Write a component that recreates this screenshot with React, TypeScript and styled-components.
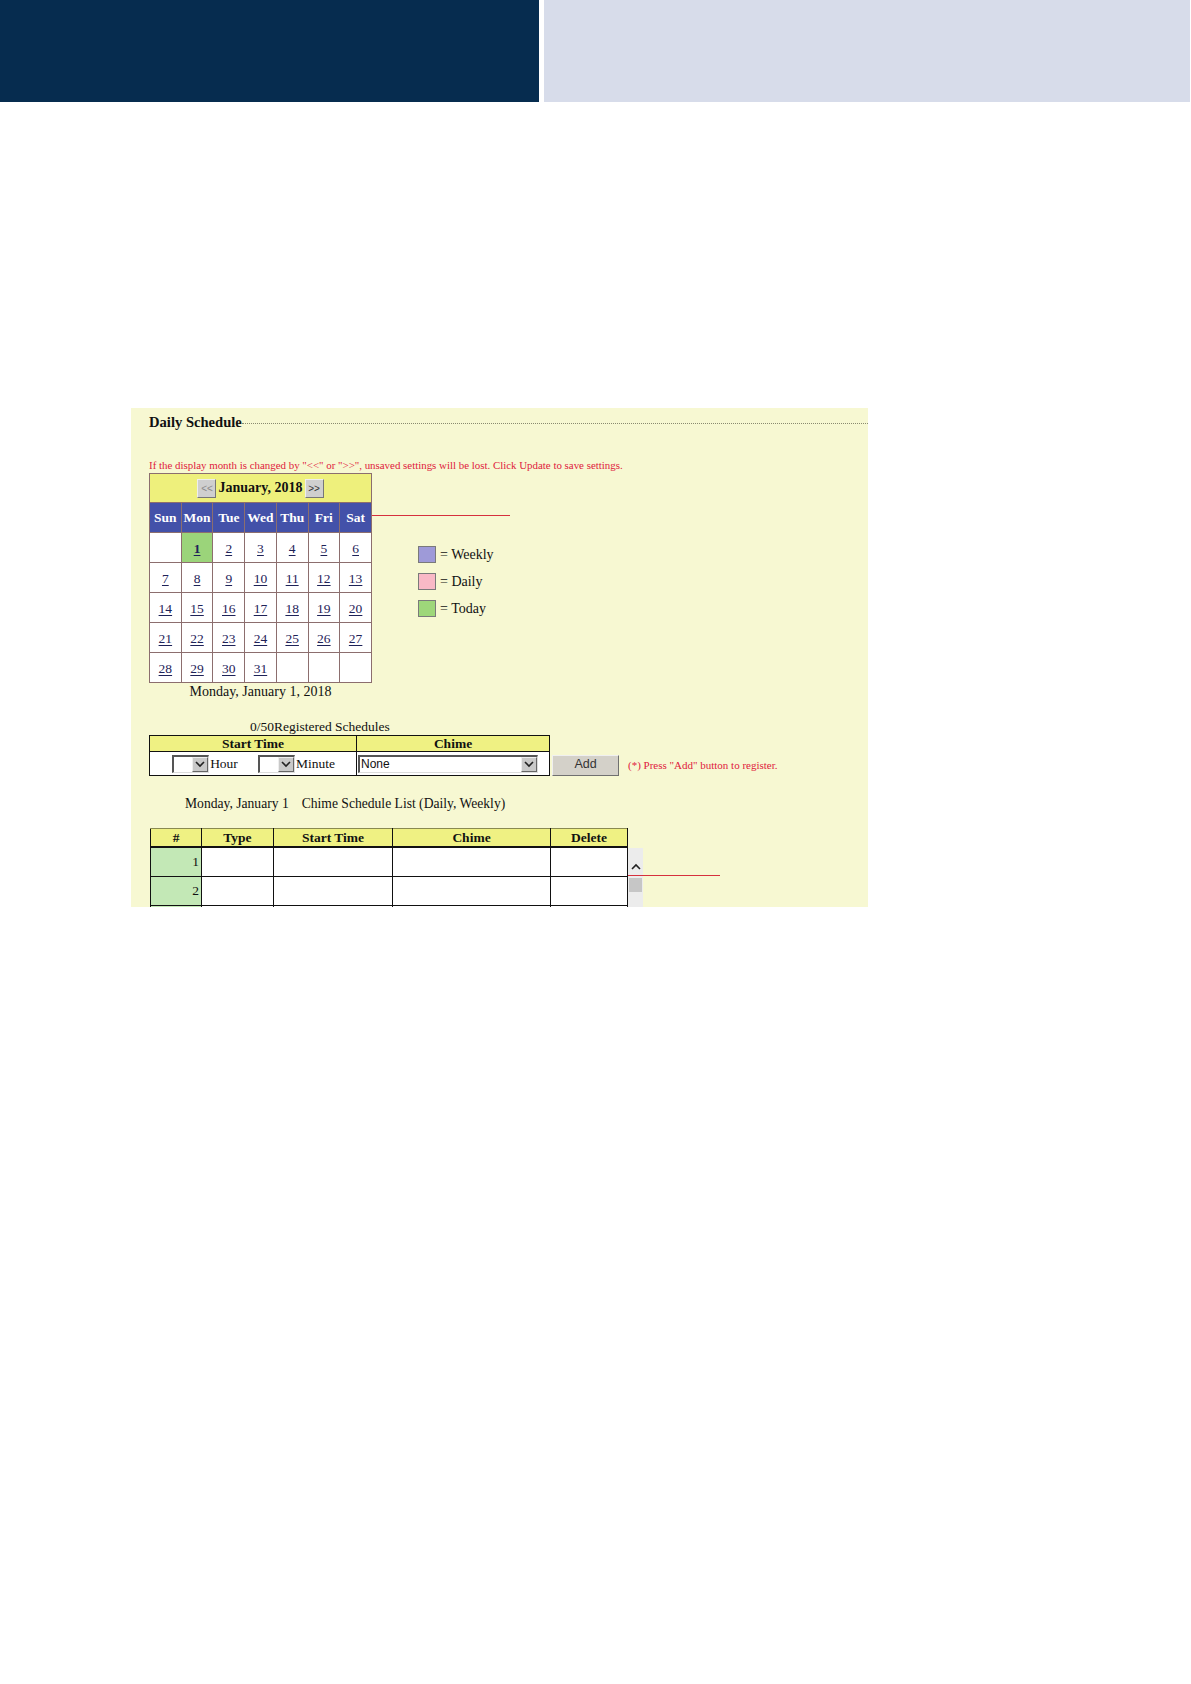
import styled, { createGlobalStyle } from 'styled-components';

const GlobalStyle = createGlobalStyle`
  body {
    margin: 0;
    background: #ffffff;
    font-family: "Liberation Serif", "Times New Roman", serif;
    color: #1a1a1a;
  }
`;

const weeks: (number | null)[][] = [
  [null, 1, 2, 3, 4, 5, 6],
  [7, 8, 9, 10, 11, 12, 13],
  [14, 15, 16, 17, 18, 19, 20],
  [21, 22, 23, 24, 25, 26, 27],
  [28, 29, 30, 31, null, null, null],
];

const dayNames = ['Sun', 'Mon', 'Tue', 'Wed', 'Thu', 'Fri', 'Sat'];

const legend = [
  { color: '#9e9ad8', label: '= Weekly' },
  { color: '#f9b9c6', label: '= Daily' },
  { color: '#9ed77a', label: '= Today' },
];

// columns of the schedule list; the last one takes what is left
const listColumns = [
  { label: '#', width: 50 },
  { label: 'Type', width: 71 },
  { label: 'Start Time', width: 118 },
  { label: 'Chime', width: 157 },
  { label: 'Delete' },
];

// the third row is only just visible at the bottom of the panel
const listRows = ['1', '2', ''];

const Chevron = ({ up }: { up?: boolean }) => (
  <svg width="10" height="7" viewBox="0 0 10 7">
    <path
      d={up ? 'M1 6 L5 2 L9 6' : 'M1 1 L5 5 L9 1'}
      fill="none"
      stroke="#222"
      strokeWidth="1.6"
    />
  </svg>
);

export default function App() {
  return (
    <>
      <GlobalStyle />
      <TopBar>
        <DarkBlock />
        <LightBlock />
      </TopBar>

      <Panel>
        <TitleRow>
          <Title>Daily Schedule</Title>
          <DottedRule />
        </TitleRow>

        <Warning>
          If the display month is changed by "&lt;&lt;" or "&gt;&gt;", unsaved settings will be lost. Click Update to save settings.
        </Warning>

        <CalendarRow>
          <CalendarWrap>
            <CalTable>
              <caption>Monday, January 1, 2018</caption>
              <tbody>
                <tr>
                  <MonthCell colSpan={7}>
                    <MonthBar>
                      <NavButton $disabled>&lt;&lt;</NavButton>
                      <MonthLabel>January, 2018</MonthLabel>
                      <NavButton>&gt;&gt;</NavButton>
                    </MonthBar>
                  </MonthCell>
                </tr>
                <tr>
                  {dayNames.map((d) => (
                    <DayName key={d}>{d}</DayName>
                  ))}
                </tr>
                {weeks.map((week, i) => (
                  <tr key={i}>
                    {week.map((day, j) => (
                      <DayCell key={j} $today={day === 1}>
                        {day && <DayLink $today={day === 1}>{day}</DayLink>}
                      </DayCell>
                    ))}
                  </tr>
                ))}
              </tbody>
            </CalTable>
            <Callout $left={223} $top={42} $width={138} />
          </CalendarWrap>

          <Legend>
            {legend.map((item) => (
              <LegendItem key={item.label}>
                <Swatch $color={item.color} />
                <span>{item.label}</span>
              </LegendItem>
            ))}
          </Legend>
        </CalendarRow>

        <Registered>0/50Registered Schedules</Registered>

        <EntryRow>
          <EntryTable>
            <tbody>
              <tr>
                <EntryHead $width={206}>Start Time</EntryHead>
                <EntryHead>Chime</EntryHead>
              </tr>
              <tr>
                <EntryCell>
                  <TimeFields>
                    <Select $width={37}>
                      <SelectText />
                      <DropButton>
                        <Chevron />
                      </DropButton>
                    </Select>
                    <FieldLabel>Hour</FieldLabel>
                    <Spacer />
                    <Select $width={37}>
                      <SelectText />
                      <DropButton>
                        <Chevron />
                      </DropButton>
                    </Select>
                    <FieldLabel>Minute</FieldLabel>
                  </TimeFields>
                </EntryCell>
                <EntryCell>
                  <Select $width={180}>
                    <SelectText>None</SelectText>
                    <DropButton>
                      <Chevron />
                    </DropButton>
                  </Select>
                </EntryCell>
              </tr>
            </tbody>
          </EntryTable>
          <AddButton>Add</AddButton>
          <Note>(*) Press "Add" button to register.</Note>
        </EntryRow>

        <ListTitle>
          <span>Monday, January 1</span>
          <span>Chime Schedule List (Daily, Weekly)</span>
        </ListTitle>

        <ListWrap>
          <ListTable>
            <thead>
              <tr>
                {listColumns.map((col) => (
                  <ListHead key={col.label} $width={col.width}>
                    {col.label}
                  </ListHead>
                ))}
              </tr>
            </thead>
            <tbody>
              {listRows.map((n, i) => (
                <tr key={i}>
                  <IndexCell>{n}</IndexCell>
                  <ListCell />
                  <ListCell />
                  <ListCell />
                  <ListCell />
                </tr>
              ))}
            </tbody>
          </ListTable>
          <Scrollbar>
            <ScrollArrow>
              <Chevron up />
            </ScrollArrow>
            <ScrollThumb />
          </Scrollbar>
          <Callout $left={478} $top={47} $width={92} />
        </ListWrap>
      </Panel>
    </>
  );
}

const TopBar = styled.header`
  display: flex;
  gap: 5px;
  height: 102px;
  padding-right: 1px;
`;

const DarkBlock = styled.div`
  width: 539px;
  background: #062c4f;
`;

const LightBlock = styled.div`
  flex: 1;
  background: #d7dcea;
`;

const Panel = styled.section`
  position: relative;
  box-sizing: border-box;
  width: 737px;
  height: 499px;
  margin: 306px 0 0 131px;
  padding: 5px 0 0 18px;
  overflow: hidden;
  background: #f7f8d2;
`;

const TitleRow = styled.div`
  display: flex;
  align-items: center;
  height: 18px;
`;

const Title = styled.h2`
  margin: 0;
  font-size: 14.6px;
  font-weight: bold;
  color: #111;
`;

const DottedRule = styled.div`
  flex: 1;
  margin-top: 3px;
  border-bottom: 1px dotted #8a8a70;
`;

const Warning = styled.p`
  margin: 27px 0 0;
  font-size: 10.9px;
  line-height: 14px;
  color: #e0203c;
  white-space: nowrap;
`;

const CalendarRow = styled.div`
  display: flex;
  margin-top: 1px;
`;

const CalendarWrap = styled.div`
  position: relative;
`;

const CalTable = styled.table`
  border-collapse: collapse;
  table-layout: fixed;
  width: 223px;
  caption-side: bottom;

  caption {
    padding-top: 1px;
    font-size: 14px;
    line-height: 16px;
    color: #111;
  }
`;

const MonthCell = styled.td`
  height: 28px;
  padding: 0;
  border: 1px solid #8c6e6e;
  background: #eef07c;
`;

const MonthBar = styled.div`
  display: flex;
  align-items: center;
  justify-content: center;
  gap: 2px;
`;

const NavButton = styled.span<{ $disabled?: boolean }>`
  box-sizing: border-box;
  display: flex;
  align-items: center;
  justify-content: center;
  width: 19px;
  height: 19px;
  border: 1px solid;
  border-color: #eee #777 #777 #eee;
  background: #cfcfcf;
  font-family: "Liberation Sans", Arial, sans-serif;
  font-size: 10px;
  color: ${(p) => (p.$disabled ? '#8a8a8a' : '#333')};
`;

const MonthLabel = styled.span`
  font-size: 14px;
  font-weight: bold;
  color: #111;
`;

const DayName = styled.td`
  height: 29px;
  padding: 0;
  border: 1px solid #8c6e6e;
  background: #4351a9;
  color: #fff;
  font-size: 13.5px;
  font-weight: bold;
  text-align: center;
`;

const DayCell = styled.td<{ $today?: boolean }>`
  height: 29px;
  padding: 0;
  border: 1px solid #8c6e6e;
  background: ${(p) => (p.$today ? '#9bd47a' : '#ffffff')};
  text-align: center;
`;

const DayLink = styled.span<{ $today?: boolean }>`
  font-size: 13.5px;
  font-weight: ${(p) => (p.$today ? 'bold' : 'normal')};
  color: #1e2258;
  text-decoration: underline;
  text-underline-offset: 2px;
`;

const Callout = styled.div<{ $left: number; $top: number; $width: number }>`
  position: absolute;
  left: ${(p) => p.$left}px;
  top: ${(p) => p.$top}px;
  width: ${(p) => p.$width}px;
  height: 1px;
  background: #d6303e;
`;

const Legend = styled.div`
  display: flex;
  flex-direction: column;
  gap: 10px;
  margin-left: 46px;
  padding-top: 73px;
`;

const LegendItem = styled.div`
  display: flex;
  align-items: center;
  gap: 4px;
  height: 17px;
  font-size: 14px;
  color: #111;
`;

const Swatch = styled.span<{ $color: string }>`
  box-sizing: border-box;
  width: 18px;
  height: 17px;
  border: 1px solid #7a7a7a;
  background: ${(p) => p.$color};
`;

const Registered = styled.div`
  margin: 19px 0 0 101px;
  font-size: 13.5px;
  line-height: 16px;
  color: #111;
`;

const EntryRow = styled.div`
  display: flex;
  align-items: flex-end;
`;

const EntryTable = styled.table`
  border-collapse: collapse;
  width: 401px;
  border: 1px solid #111;
  background: #fff;
`;

const EntryHead = styled.th<{ $width?: number }>`
  width: ${(p) => (p.$width ? `${p.$width}px` : 'auto')};
  height: 15px;
  padding: 0;
  border: 1px solid #111;
  background: #eff183;
  font-size: 13.5px;
  line-height: 14px;
  color: #111;
`;

const EntryCell = styled.td`
  height: 23px;
  padding: 0 0 0 1px;
  border: 1px solid #111;
`;

const TimeFields = styled.div`
  display: flex;
  align-items: center;
  justify-content: center;
  font-size: 13.5px;
`;

const Spacer = styled.span`
  width: 20px;
`;

const FieldLabel = styled.span`
  margin-left: 1px;
  color: #111;
`;

const Select = styled.div<{ $width: number }>`
  box-sizing: border-box;
  display: flex;
  width: ${(p) => p.$width}px;
  height: 18px;
  border-style: solid;
  border-width: 2px 1px 1px 2px;
  border-color: #555 #ddd #ddd #555;
  background: #fff;
`;

const SelectText = styled.span`
  flex: 1;
  padding-left: 1px;
  font-family: "Liberation Sans", Arial, sans-serif;
  font-size: 12px;
  line-height: 15px;
  color: #111;
`;

const DropButton = styled.span`
  box-sizing: border-box;
  display: flex;
  align-items: center;
  justify-content: center;
  width: 16px;
  border: 1px solid;
  border-color: #eee #666 #666 #eee;
  background: #c9c9c9;
`;

const AddButton = styled.button`
  box-sizing: border-box;
  width: 67px;
  height: 21px;
  margin-left: 2px;
  padding: 0 0 3px;
  border: 1px solid;
  border-color: #f0f0f0 #707070 #707070 #f0f0f0;
  background: #d4d1c9;
  font-family: "Liberation Sans", Arial, sans-serif;
  font-size: 12.5px;
  color: #333;
`;

const Note = styled.span`
  margin: 0 0 4px 9px;
  font-size: 11px;
  line-height: 14px;
  color: #e0203c;
`;

const ListTitle = styled.div`
  display: flex;
  gap: 13px;
  margin: 20px 0 0 36px;
  font-size: 13.6px;
  line-height: 16px;
  color: #111;
`;

const ListWrap = styled.div`
  position: relative;
  display: flex;
  align-items: flex-start;
  margin: 16px 0 0 1px;
`;

const ListTable = styled.table`
  border-collapse: collapse;
  table-layout: fixed;
  width: 478px;
  background: #fff;
`;

const ListHead = styled.th<{ $width?: number }>`
  width: ${(p) => (p.$width ? `${p.$width}px` : 'auto')};
  height: 17px;
  padding: 0;
  border: 1px solid #111;
  border-top-color: #8a8a50;
  border-bottom: 2px solid #111;
  background: #eff183;
  font-size: 13.5px;
  line-height: 15px;
  color: #111;
`;

const ListCell = styled.td`
  height: 28px;
  padding: 0;
  border: 1px solid #111;
`;

const IndexCell = styled(ListCell)`
  padding-right: 2px;
  background: #c3e8b6;
  text-align: right;
  font-size: 13.5px;
  color: #111;
`;

const Scrollbar = styled.div`
  display: flex;
  flex-direction: column;
  align-items: center;
  width: 15px;
  height: 80px;
  margin-top: 20px;
  background: #ececec;
`;

const ScrollArrow = styled.div`
  display: flex;
  align-items: center;
  justify-content: center;
  height: 30px;
  padding-top: 6px;
  box-sizing: border-box;
`;

const ScrollThumb = styled.div`
  width: 13px;
  height: 14px;
  background: #c6c6c6;
`;
